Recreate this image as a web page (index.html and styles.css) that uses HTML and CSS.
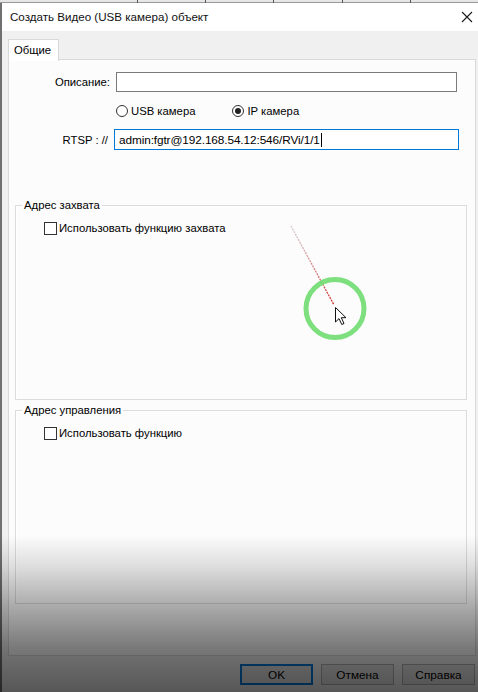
FILE: index.html
```html
<!DOCTYPE html>
<html lang="ru">
<head>
<meta charset="utf-8">
<title>Создать Видео</title>
<link rel="stylesheet" href="styles.css">
</head>
<body>
<div class="screen">
  <div class="topstrip"><span></span><span></span><span></span><span></span><span></span></div>
  <div class="window">
    <div class="titlebar">
      <span class="title">Создать Видео (USB камера) объект</span>
      <svg class="close" width="12" height="12" viewBox="0 0 12 12"><path d="M1 1 L11 11 M11 1 L1 11" stroke="#1a1a1a" stroke-width="1.1" fill="none"/></svg>
    </div>
    <div class="client">
      <div class="tabs"><div class="tab">Общие</div><div class="tabline"></div></div>
      <div class="panel">
        <div class="row row-desc">
          <label class="lbl">Описание:</label>
          <div class="input"></div>
        </div>
        <div class="row row-radio">
          <div class="radio"><span class="rdot"></span><span>USB камера</span></div>
          <div class="radio"><span class="rdot on"></span><span>IP камера</span></div>
        </div>
        <div class="row row-rtsp">
          <label class="lbl lbl-rtsp">RTSP : //</label>
          <div class="input focus">admin:fgtr@192.168.54.12:546/RVi/1/1<span class="caret"></span></div>
        </div>
        <div class="group group1">
          <span class="legend">Адрес захвата</span>
          <div class="check"><span class="box"></span><span>Использовать функцию захвата</span></div>
        </div>
        <div class="group group2">
          <span class="legend">Адрес управления</span>
          <div class="check"><span class="box"></span><span>Использовать функцию</span></div>
        </div>
      </div>
      <div class="buttons">
        <div class="btn default">OK</div>
        <div class="btn">Отмена</div>
        <div class="btn">Справка</div>
      </div>
    </div>
  </div>
  <svg class="scribble" width="478" height="692" viewBox="0 0 478 692">
    <defs>
      <linearGradient id="lg" x1="291" y1="226" x2="334" y2="306" gradientUnits="userSpaceOnUse">
        <stop offset="0" stop-color="#b0a0a0" stop-opacity="0.5"/>
        <stop offset="1" stop-color="#d42020"/>
      </linearGradient>
    </defs>
    <line x1="291" y1="226" x2="334" y2="305" stroke="url(#lg)" stroke-width="1.3" stroke-dasharray="2 1"/>
    <circle cx="335" cy="308.5" r="29" fill="none" stroke="#6fdc6f" stroke-width="5" opacity="0.9"/>
    <path d="M335.5 307.5 L335.5 322 L339 318.6 L341.8 324.5 L344 323.5 L341.3 317.7 L346 317.7 Z" fill="#fff" stroke="#111" stroke-width="1" stroke-linejoin="round"/>
  </svg>
  <div class="shade"></div>
</div>
</body>
</html>
```

FILE: styles.css
```css
* { box-sizing: border-box; }
html, body { margin: 0; padding: 0; }
body {
  width: 478px;
  height: 692px;
  overflow: hidden;
  background: #f0f0f0;
  font-family: "Liberation Sans", Arial, sans-serif;
  font-size: 11.3px;
  color: #000;
}
.screen {
  position: relative;
  width: 478px;
  height: 692px;
  display: flex;
  flex-direction: column;
}
.topstrip {
  height: 3px;
  background: #e6e6e6;
  border-bottom: 1px solid #9a9a9a;
  display: flex;
  padding-left: 137px;
}
.topstrip span {
  width: 80px;
  border-left: 1px solid #555;
  height: 3px;
}
.window {
  flex: 1;
  display: flex;
  flex-direction: column;
  border-left: 2px solid #707070;
  background: #f0f0f0;
}
.titlebar {
  height: 28px;
  background: #fff;
  display: flex;
  align-items: center;
  justify-content: space-between;
  padding: 0 5px 0 8px;
}
.title {
  font-family: "Liberation Sans", Arial, sans-serif;
  font-size: 11.6px;
  color: #111;
  padding-bottom: 2px;
}
.close { margin-bottom: 1px; }
.client {
  flex: 1;
  display: flex;
  flex-direction: column;
  padding: 8px 2px 0 6px;
}
.tabs {
  display: flex;
  height: 21px;
}
.tab {
  width: 51px;
  height: 22px;
  background: #fff;
  border: 1px solid #d9d9d9;
  border-bottom: none;
  padding: 4px 0 0 5px;
  position: relative;
  z-index: 1;
}
.tabline {
  flex: 1;
  border-bottom: 1px solid #d9d9d9;
}
.panel {
  height: 596px;
  background: #fcfcfc;
  border: 1px solid #d9d9d9;
  border-top: none;
  display: flex;
  flex-direction: column;
  padding: 0 7px 0 6px;
}
.row {
  display: flex;
  align-items: center;
}
.lbl {
  width: 101px;
  text-align: right;
  padding-right: 6px;
}
.row-desc { margin-top: 12px; height: 20px; }
.input {
  height: 20px;
  width: 341px;
  background: #fff;
  border: 1px solid #7a7a7a;
  display: flex;
  align-items: center;
  padding-left: 4px;
  font-size: 11.8px;
  letter-spacing: -0.1px;
}
.row-radio { margin-top: 10px; height: 17px; padding-left: 101px; }
.radio { display: flex; align-items: center; gap: 3px; }
.radio + .radio { margin-left: 37px; }
.rdot {
  width: 12px;
  height: 12px;
  border: 1px solid #333;
  border-radius: 50%;
  background: #fff;
  position: relative;
}
.rdot.on::after {
  content: "";
  position: absolute;
  left: 2px; top: 2px;
  width: 6px; height: 6px;
  border-radius: 50%;
  background: #222;
}
.row-rtsp { margin-top: 10px; height: 21px; }
.lbl-rtsp { width: 99px; }
.input.focus {
  width: 345px;
  height: 21px;
  border: 1px solid #0078d7;
  padding-left: 4px;
}
.caret {
  display: inline-block;
  width: 1px;
  height: 14px;
  background: #000;
  margin-left: 1px;
}
.group {
  position: relative;
  border: 1px solid #dcdcdc;
  width: 452px;
  box-shadow: inset 1px 1px 0 #fff;
}
.group1 { margin-top: 55px; height: 195px; }
.group2 { margin-top: 10px; height: 194px; }
.legend {
  position: absolute;
  top: -8px;
  left: 6px;
  padding: 0 2px;
  background: #fcfcfc;
  line-height: 14px;
}
.check {
  display: flex;
  align-items: center;
  gap: 2px;
  margin-top: 15px;
  margin-left: 28px;
  height: 14px;
}
.box {
  width: 13px;
  height: 13px;
  border: 1px solid #333;
  background: #fff;
}
.buttons {
  display: flex;
  justify-content: flex-end;
  gap: 8px;
  margin-top: 8px;
  padding-right: 1px;
}
.btn {
  width: 73px;
  height: 21px;
  background: #e1e1e1;
  border: 1px solid #adadad;
  display: flex;
  align-items: center;
  justify-content: center;
  font-size: 11.8px;
}
.btn.default {
  border: 1px solid #0078d7;
  box-shadow: inset 0 0 0 1px #0078d7;
}
.scribble {
  position: absolute;
  left: 0;
  top: 0;
  pointer-events: none;
}
.shade {
  position: absolute;
  left: 0;
  right: 0;
  top: 535px;
  bottom: 0;
  background: linear-gradient(to bottom, rgba(0,0,0,0) 0%, rgba(0,0,0,0.12) 20%, rgba(0,0,0,0.32) 45%, rgba(0,0,0,0.52) 72%, rgba(0,0,0,0.64) 100%);
  pointer-events: none;
}
```
